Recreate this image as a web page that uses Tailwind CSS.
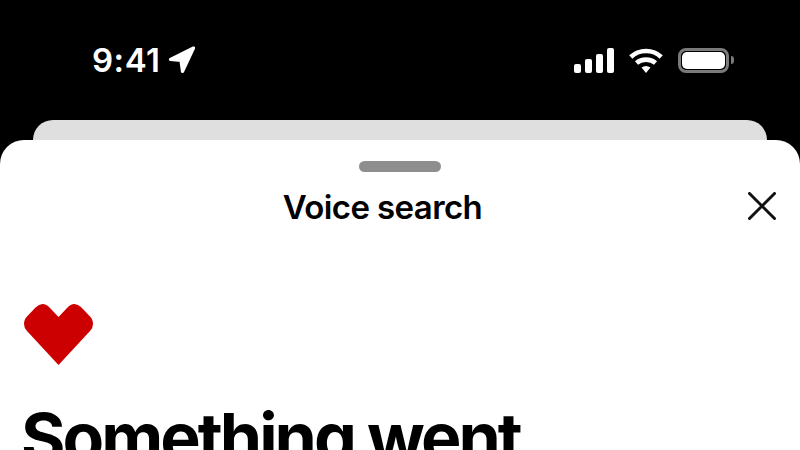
<!DOCTYPE html>
<html lang="en">
<head>
    <meta charset="UTF-8">
    <meta name="viewport" content="width=device-width, initial-scale=1.0">
    <title>Voice search</title>
    <script src="https://cdn.jsdelivr.net/npm/@tailwindcss/browser@4"></script>
</head>
<body class="bg-black font-['Inter',sans-serif]">
    <div class="w-[800px] h-[450px] overflow-hidden flex flex-col bg-black">
        <!-- Status bar -->
        <div class="h-[120px] shrink-0 flex items-start justify-between pl-[92px] pr-[66px] pt-[40px] text-white">
            <div class="flex items-center gap-[7px] h-[40px]">
                <span class="text-[33px] leading-[40px] font-semibold tracking-[0.5px]">9:41</span>
                <svg width="28" height="28" viewBox="0 0 28 28" fill="#fff" stroke="#fff" stroke-width="3.2" stroke-linejoin="round"><path d="M25.5 2 L2.5 13.5 L13 14.5 L14.5 25.5 Z"/></svg>
            </div>
            <div class="flex items-center gap-[15px] h-[40px]">
                <svg width="40" height="25" viewBox="0 0 40 25" fill="#fff">
                    <rect x="0" y="16" width="7" height="9" rx="2"/>
                    <rect x="11" y="11" width="7" height="14" rx="2"/>
                    <rect x="22" y="6" width="7" height="19" rx="2"/>
                    <rect x="33" y="0" width="7" height="25" rx="2"/>
                </svg>
                <svg width="34" height="25" viewBox="0 0 34 25" fill="none" stroke="#fff" stroke-width="4.6">
                    <path d="M1.8 9 C10 1 24 1 32.2 9"/>
                    <path d="M7.5 15 C12.5 10.5 21.5 10.5 26.5 15"/>
                    <path d="M12.5 19.5 L17 25 L21.5 19.5 C18.5 17.5 15.5 17.5 12.5 19.5 Z" fill="#fff" stroke="none"/>
                </svg>
                <div class="flex items-center gap-[2px]">
                    <div class="w-[51px] h-[25px] rounded-[8px] border-[3px] border-[#7a7a7a] p-[1px]">
                        <div class="w-full h-full rounded-[5px] bg-white"></div>
                    </div>
                    <div class="w-[3px] h-[8px] rounded-r-full bg-[#7a7a7a]"></div>
                </div>
            </div>
        </div>

        <!-- Card behind the sheet -->
        <div class="h-5 shrink-0 mx-[33px] rounded-t-[20px] bg-[#dfdfdf]"></div>

        <!-- Sheet -->
        <div class="flex-1 rounded-t-[24px] bg-white text-black px-[22px] min-h-0">
            <div class="w-[82px] h-[11px] mx-auto mt-[21px] rounded-full bg-[#8e8e8e]"></div>
            <div class="relative mt-[13px] h-[44px] flex items-center justify-center pr-[35px]">
                <h2 class="text-[33px] leading-[44px] font-semibold tracking-[-0.6px]">Voice search</h2>
                <svg class="absolute right-[2px] top-[7px]" width="28" height="28" viewBox="0 0 28 28" fill="none" stroke="#111" stroke-width="3" stroke-linecap="round"><path d="M1.5 1.5 L26.5 26.5 M26.5 1.5 L1.5 26.5"/></svg>
            </div>
            <svg class="mt-[75px] ml-[2px]" width="69" height="61" viewBox="0 0 69 61" fill="#cc0000"><path d="M34.5 13 L26 4 Q22.5 0 18.5 0 Q15 0 11.5 3.5 L3 12.5 Q0 15.5 0 20 Q0 24 3 27 L34.5 61 L66 27 Q69 24 69 20 Q69 15.5 66 12.5 L57.5 3.5 Q54 0 50.5 0 Q46.5 0 43 4 Z"/></svg>
            <h1 class="mt-[32px] -ml-[1px] text-[68px] leading-[80px] font-bold tracking-[-3px] whitespace-nowrap">Something went</h1>
        </div>
    </div>
</body>
</html>
